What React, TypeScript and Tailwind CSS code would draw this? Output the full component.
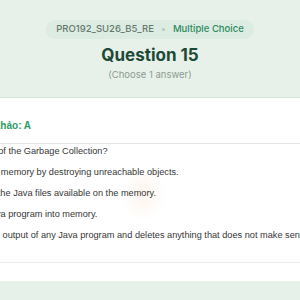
import React from "react";

export default function App() {
  const body = { fontFamily: '"Liberation Sans", Arial, sans-serif' } as const;
  const ui = { fontFamily: 'Inter, "Noto Sans", sans-serif' } as const;
  return (
    <div className="w-[300px] h-[300px] overflow-hidden bg-[#e7f1ea] flex flex-col">
      <header
        className="h-[98px] shrink-0 flex flex-col items-center border-b border-[#d6e6dc] bg-[#e7f1ea]"
        style={ui}
      >
        <div className="mt-[20px] h-[19px] px-[10px] rounded-full bg-[#dcece2] flex items-center gap-[8px] text-[9.5px] font-medium">
          <span className="text-[#667a6e]">PRO192_SU26_B5_RE</span>
          <span className="w-[3px] h-[3px] rounded-full bg-[#b5c9bc]" />
          <span className="text-[#2f8a5e]">Multiple Choice</span>
        </div>
        <h1 className="mt-[5px] text-[17px] leading-[22px] font-bold text-[#1d4a36]">Question 15</h1>
        <p className="mt-[3px] text-[9.5px] leading-[12px] text-[#8c9b91]">(Choose 1 answer)</p>
      </header>

      <section className="relative h-[183px] shrink-0 bg-white flex flex-col overflow-hidden">
        <div className="absolute left-[130px] top-[80px] w-[26px] h-[34px] rounded-full bg-[#fbe7d6] opacity-35 blur-[6px]" />
        <div className="pt-[22px] pb-[11px] border-b border-[#e4e4e4] whitespace-nowrap" style={body}>
          <div className="-ml-[68px] text-[10px] leading-[12px] font-bold text-[#2e9a68]">Đáp án tham khảo: A</div>
        </div>
        <div className="relative flex flex-col whitespace-nowrap text-[9.2px] text-[#363636] pb-[16px] border-b border-[#ececec]" style={body}>
          <p className="-ml-[86px] leading-[14px]">What is the purpose of the Garbage Collection?</p>
          <div className="mt-[4px] flex flex-col">
            <p className="-ml-[41px] leading-[21px]">A. It frees memory by destroying unreachable objects.</p>
            <p className="-ml-[65px] leading-[21px]">B. It deletes all the Java files available on the memory.</p>
            <p className="-ml-[73px] leading-[21px]">C. It loads the Java program into memory.</p>
            <p className="-ml-[74px] leading-[21px]">D. It examines the output of any Java program and deletes anything that does not make sense.</p>
          </div>
        </div>
      </section>
      <div className="flex-1 bg-[#e6f1ea]" />
    </div>
  );
}
